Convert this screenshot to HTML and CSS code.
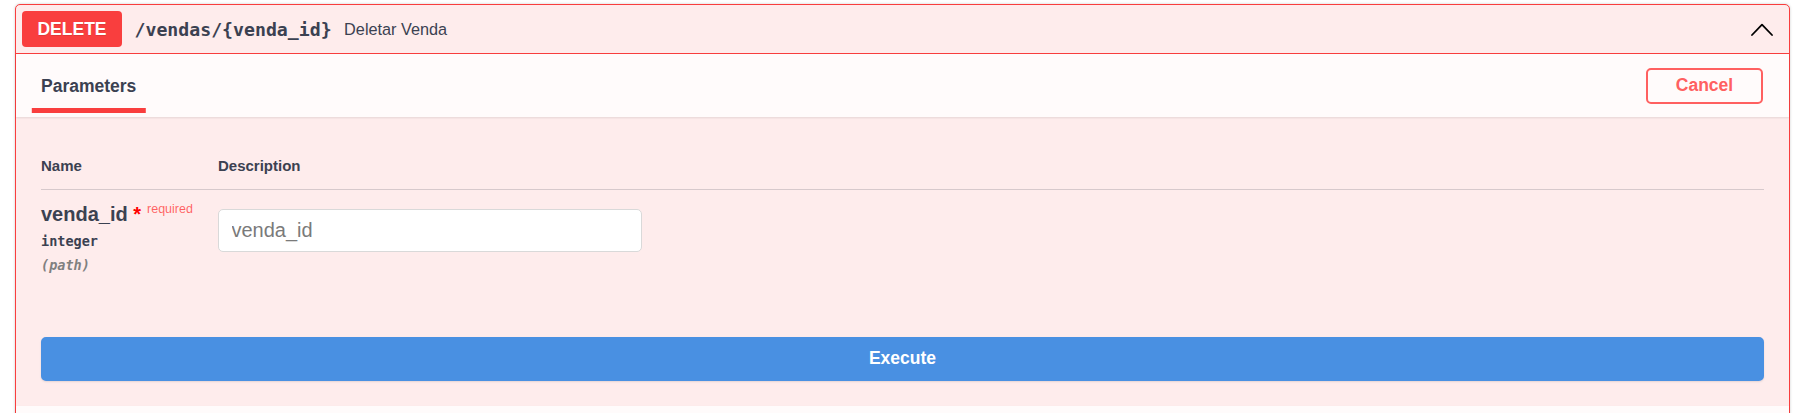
FILE: index.html
```html
<!DOCTYPE html>
<html lang="pt">
<head>
<meta charset="utf-8">
<title>DELETE /vendas/{venda_id}</title>
<link rel="stylesheet" href="styles.css">
</head>
<body>
<div class="page">
  <div class="opblock">
    <div class="summary">
      <span class="method">DELETE</span>
      <span class="path">/vendas/{venda_id}</span>
      <span class="summary-desc">Deletar Venda</span>
      <svg class="arrow" width="22" height="13" viewBox="0 0 22 13" aria-hidden="true">
        <polyline points="1,12 11,1.6 21,12" fill="none" stroke="#000" stroke-width="1.8" stroke-linecap="round" stroke-linejoin="round"/>
      </svg>
    </div>
    <div class="body">
      <div class="section-header">
        <div class="tab-item"><h4><span class="tab-label">Parameters</span></h4></div>
        <button class="btn-cancel">Cancel</button>
      </div>
      <div class="table-container">
        <div class="param-head">
          <div class="col-name">Name</div>
          <div class="col-desc">Description</div>
        </div>
        <div class="param-row">
          <div class="col-name">
            <div class="param-name">venda_id<span class="star">&nbsp;*</span><span class="required">required</span></div>
            <div class="param-type">integer</div>
            <div class="param-in">(path)</div>
          </div>
          <div class="col-desc">
            <input class="param-input" type="text" placeholder="venda_id">
          </div>
        </div>
      </div>
      <div class="execute-wrapper">
        <button class="btn-execute">Execute</button>
      </div>
      <div class="section-header responses-header"></div>
    </div>
  </div>
</div>
</body>
</html>
```
FILE: styles.css
```css
html, body {
  margin: 0;
  padding: 0;
  background: #fff;
  overflow: hidden;
}

body {
  font-family: "Liberation Sans", Arial, sans-serif;
  color: #3b4151;
}

.page {
  padding: 4px 24px 0 15px;
}

.opblock {
  border: 1px solid #f93e3e;
  border-radius: 5px;
  background: #feecec;
  box-shadow: 0 0 3px rgba(0, 0, 0, 0.19);
}

.summary {
  display: flex;
  align-items: center;
  padding: 6px;
  border-bottom: 1px solid #f93e3e;
}

.method {
  width: 100px;
  height: 36px;
  display: flex;
  align-items: center;
  justify-content: center;
  background: #f93e3e;
  color: #fff;
  font-weight: 700;
  font-size: 17.5px;
  border-radius: 4px;
  text-shadow: 0 1px 0 rgba(0, 0, 0, 0.1);
}

.path {
  padding: 0 12.5px;
  font-family: "DejaVu Sans Mono", "Liberation Mono", monospace;
  font-weight: 700;
  font-size: 18.2px;
  color: #3b4151;
}

.summary-desc {
  flex: 1;
  font-size: 16.25px;
  color: #3b4151;
}

.arrow {
  margin-right: 10px;
  flex: none;
}

.section-header {
  height: 63px;
  box-sizing: border-box;
  display: flex;
  align-items: center;
  justify-content: space-between;
  padding: 0 26px 0 25px;
  background: rgba(255, 255, 255, 0.8);
  box-shadow: 0 1px 2px rgba(0, 0, 0, 0.1);
}

.tab-item h4 {
  margin: 0;
  font-size: 17.5px;
  font-weight: 700;
  line-height: 20px;
  color: #3b4151;
}

.tab-label {
  position: relative;
  display: inline-block;
}

.tab-label::after {
  content: "";
  position: absolute;
  left: 50%;
  bottom: -17.5px;
  width: 120%;
  height: 5px;
  transform: translateX(-50%);
  background: #f93e3e;
}

.btn-cancel {
  height: 36px;
  width: 117px;
  box-sizing: border-box;
  border: 2.5px solid #ff6060;
  border-radius: 5px;
  background: transparent;
  color: #ff6060;
  font-family: "Liberation Sans", Arial, sans-serif;
  font-weight: 700;
  font-size: 17.5px;
  padding: 0;
}

.table-container {
  padding: 25px;
}

.param-head {
  display: flex;
  padding: 15px 0;
  border-bottom: 1px solid rgba(59, 65, 81, 0.2);
  font-size: 15px;
  font-weight: 700;
  line-height: 17px;
}

.col-name {
  width: 177px;
  flex: none;
}

.col-desc {
  flex: 1;
}

.param-row {
  display: flex;
  padding: 12.5px 0;
}

.param-name {
  font-size: 20px;
  font-weight: 700;
  line-height: 23px;
  color: #3b4151;
  white-space: nowrap;
}

.star {
  color: red;
}

.required {
  position: relative;
  top: -7.5px;
  padding-left: 6px;
  font-size: 12.5px;
  line-height: 1;
  font-weight: 400;
  color: rgba(255, 0, 0, 0.6);
}

.param-type {
  padding: 6.25px 0;
  font-family: "DejaVu Sans Mono", "Liberation Mono", monospace;
  font-weight: 700;
  font-size: 13.5px;
  line-height: 18px;
  color: #3b4151;
}

.param-in {
  font-family: "DejaVu Sans Mono", "Liberation Mono", monospace;
  font-style: italic;
  font-weight: 700;
  font-size: 13.5px;
  line-height: 18px;
  color: #808080;
}

.param-input {
  display: block;
  margin: 6.25px 0;
  width: 424px;
  height: 43px;
  box-sizing: border-box;
  padding: 9px 12.5px;
  border: 1px solid #d9d9d9;
  border-radius: 5px;
  background: #fff;
  font-family: "Liberation Sans", Arial, sans-serif;
  font-size: 20px;
  color: #3b4151;
  outline: none;
}

.param-input::placeholder {
  color: #7a7a7a;
}

.execute-wrapper {
  padding: 25px;
}

.btn-execute {
  display: block;
  width: 100%;
  height: 44px;
  border: 2.5px solid #4990e2;
  border-radius: 5px;
  background: #4990e2;
  color: #fff;
  font-family: "Liberation Sans", Arial, sans-serif;
  font-weight: 700;
  font-size: 17.5px;
  box-shadow: 0 1px 2px rgba(0, 0, 0, 0.1);
}

.responses-header {
  height: 63px;
}
```
